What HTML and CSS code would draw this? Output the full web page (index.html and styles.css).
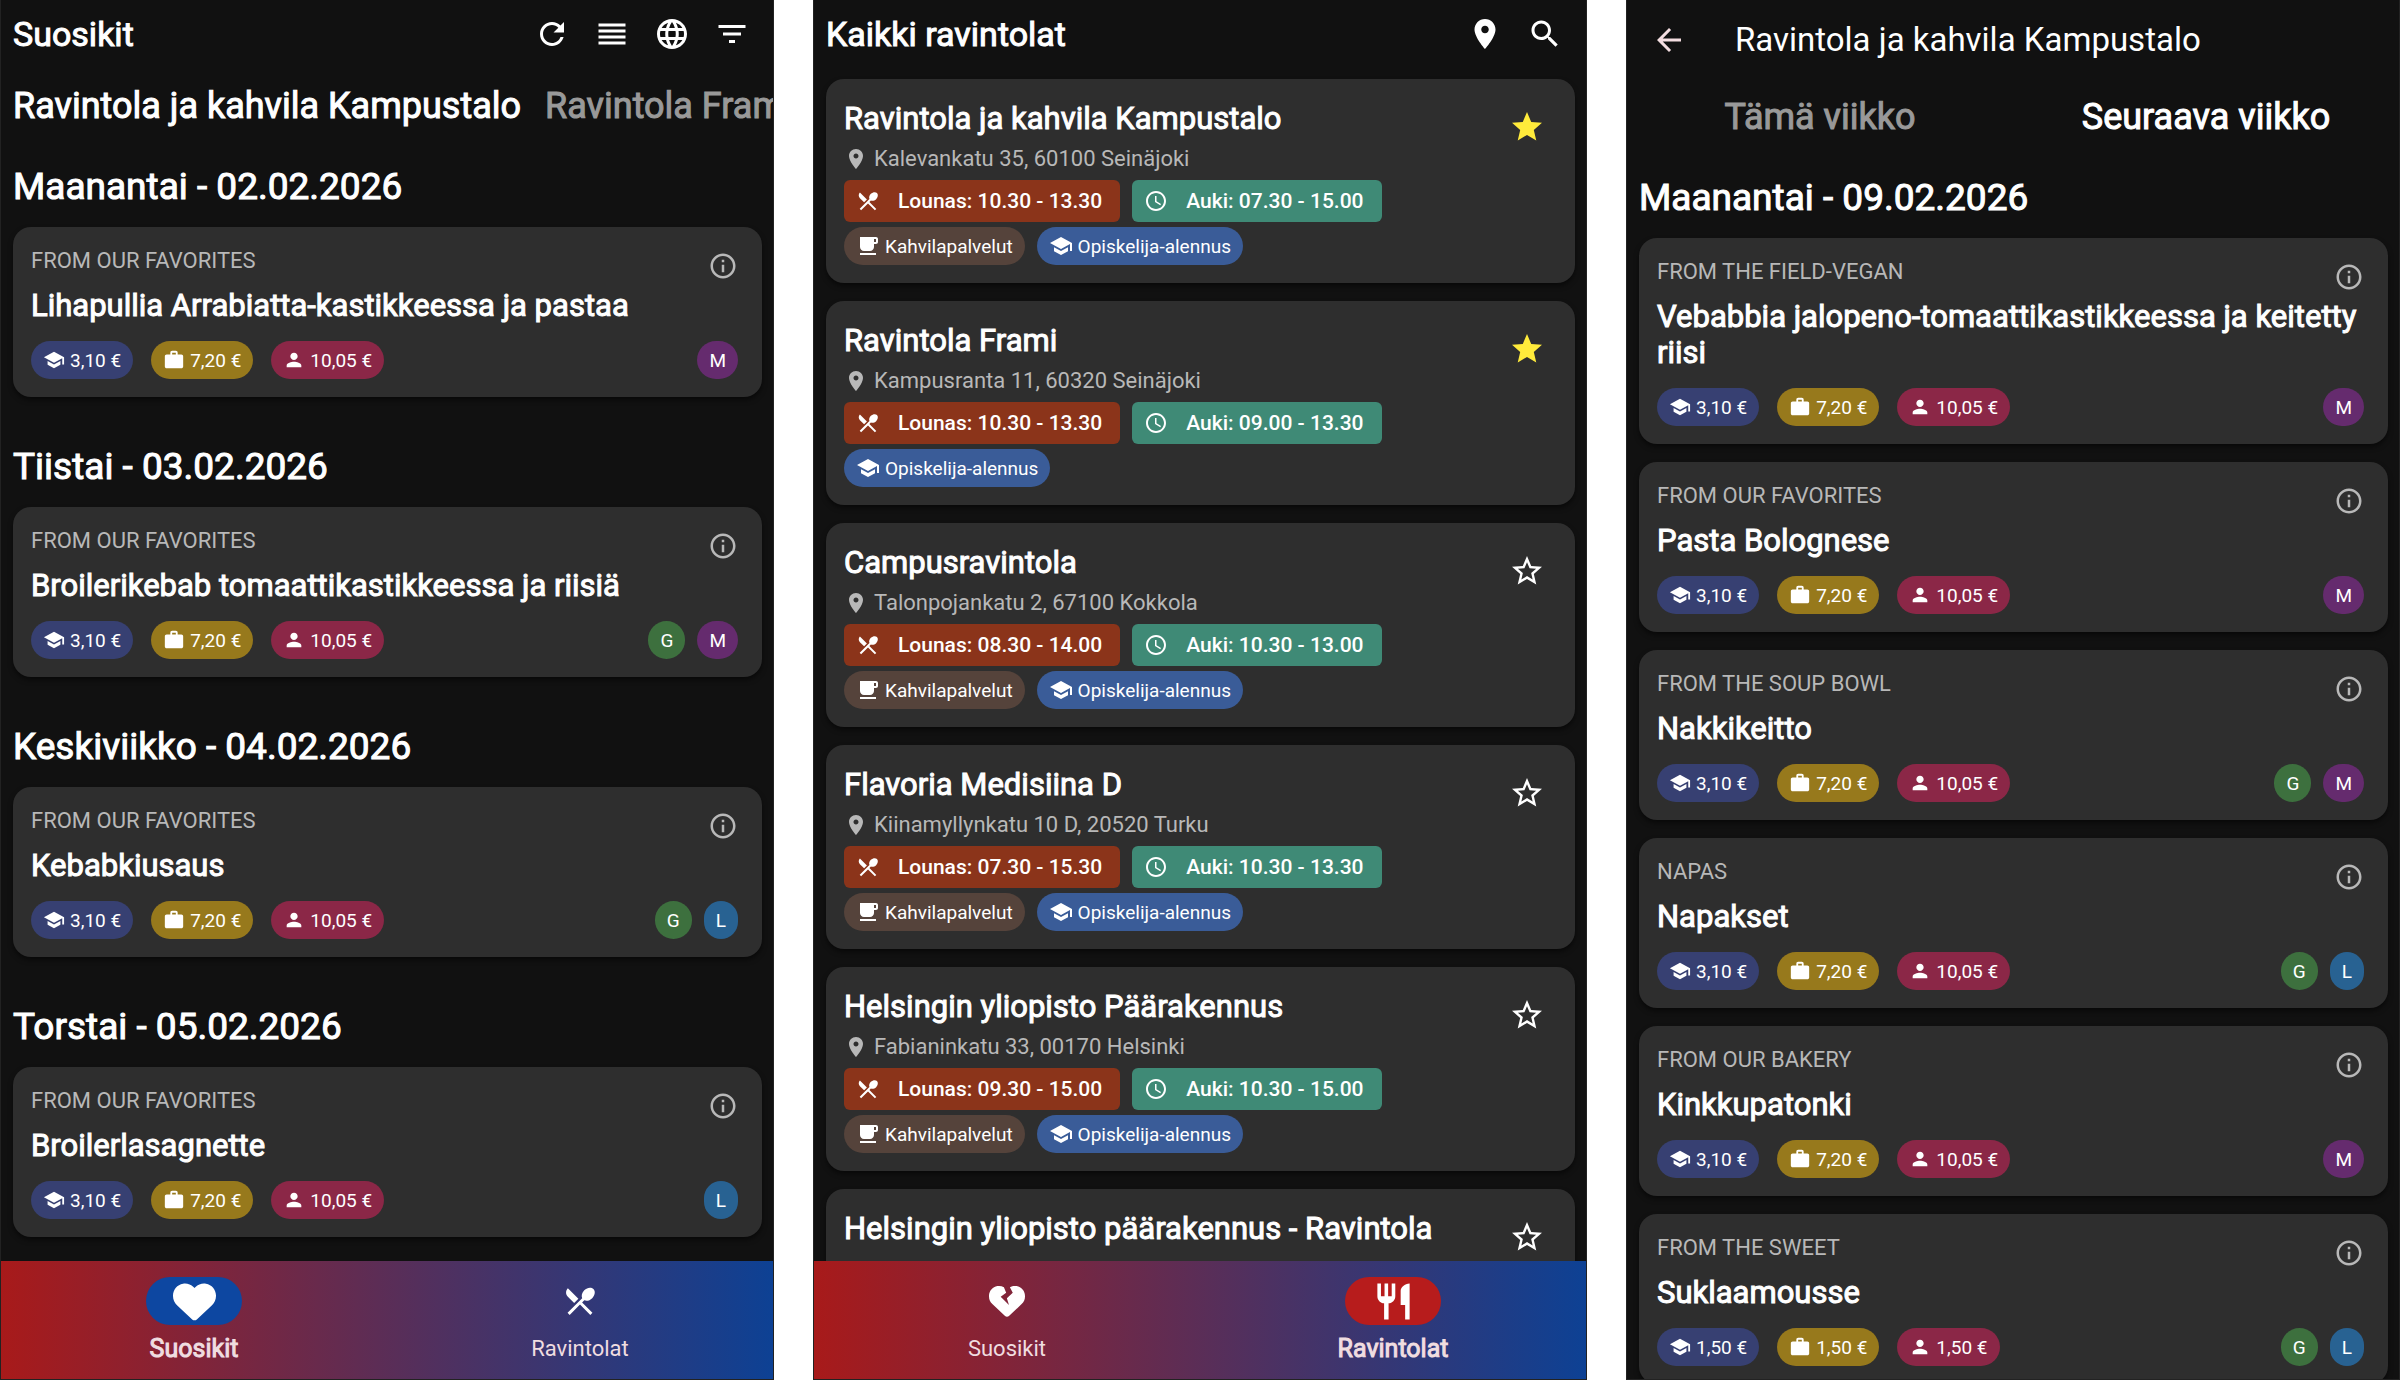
FILE: index.html
```html
<!DOCTYPE html>
<html lang="fi">
<head>
  <meta charset="UTF-8" />
  <meta name="viewport" content="width=device-width, initial-scale=1.0"/>
  <title>Ravintolat</title>
  <link rel="stylesheet" href="styles.css">
</head>
<body>

  <!-- Icons -->
  <svg class="sprite" aria-hidden="true">
    <symbol id="refresh" viewBox="0 0 24 24"><path d="M17.65 6.35C16.2 4.9 14.21 4 12 4c-4.42 0-7.99 3.58-7.99 8s3.57 8 7.99 8c3.73 0 6.84-2.55 7.73-6h-2.08c-.82 2.33-3.04 4-5.65 4-3.31 0-6-2.69-6-6s2.69-6 6-6c1.66 0 3.14.69 4.22 1.78L13 11h7V4l-2.35 2.35z"/></symbol>
    <symbol id="reorder" viewBox="0 0 24 24"><path d="M3 15h18v-2H3v2zm0 4h18v-2H3v2zm0-8h18V9H3v2zm0-6v2h18V5H3z"/></symbol>
    <symbol id="language" viewBox="0 0 24 24"><path d="M11.99 2C6.47 2 2 6.48 2 12s4.47 10 9.99 10C17.52 22 22 17.52 22 12S17.52 2 11.99 2zm6.93 6h-2.95c-.32-1.25-.78-2.45-1.38-3.56 1.84.63 3.37 1.91 4.33 3.56zM12 4.04c.83 1.2 1.48 2.53 1.91 3.96h-3.82c.43-1.43 1.08-2.76 1.91-3.96zM4.26 14C4.1 13.36 4 12.69 4 12s.1-1.36.26-2h3.38c-.08.66-.14 1.32-.14 2 0 .68.06 1.34.14 2H4.26zm.82 2h2.95c.32 1.25.78 2.45 1.38 3.56-1.84-.63-3.37-1.9-4.33-3.56zm2.95-8H5.08c.96-1.66 2.49-2.93 4.33-3.56C8.81 5.55 8.35 6.75 8.03 8zM12 19.96c-.83-1.2-1.48-2.53-1.91-3.96h3.82c-.43 1.43-1.08 2.76-1.91 3.96zM14.34 14H9.66c-.09-.66-.16-1.32-.16-2 0-.68.07-1.35.16-2h4.68c.09.65.16 1.32.16 2 0 .68-.07 1.34-.16 2zm.25 5.56c.6-1.11 1.06-2.31 1.38-3.56h2.95c-.96 1.65-2.49 2.93-4.33 3.56zM16.36 14c.08-.66.14-1.32.14-2 0-.68-.06-1.34-.14-2h3.38c.16.64.26 1.31.26 2s-.1 1.36-.26 2h-3.38z"/></symbol>
    <symbol id="filter" viewBox="0 0 24 24"><path d="M10 18h4v-2h-4v2zM3 6v2h18V6H3zm3 7h12v-2H6v2z"/></symbol>
    <symbol id="info" viewBox="0 0 24 24"><path d="M11 7h2v2h-2zm0 4h2v6h-2zm1-9C6.48 2 2 6.48 2 12s4.48 10 10 10 10-4.48 10-10S17.52 2 12 2zm0 18c-4.41 0-8-3.59-8-8s3.59-8 8-8 8 3.59 8 8-3.59 8-8 8z"/></symbol>
    <symbol id="school" viewBox="0 0 24 24"><path d="M5 13.18v4L12 21l7-3.82v-4L12 17l-7-3.82zM12 3L1 9l11 6 9-4.91V17h2V9L12 3z"/></symbol>
    <symbol id="work" viewBox="0 0 24 24"><path d="M20 6h-4V4c0-1.11-.89-2-2-2h-4c-1.11 0-2 .89-2 2v2H4c-1.11 0-1.99.89-1.99 2L2 19c0 1.11.89 2 2 2h16c1.11 0 2-.89 2-2V8c0-1.11-.89-2-2-2zm-6 0h-4V4h4v2z"/></symbol>
    <symbol id="person" viewBox="0 0 24 24"><path d="M12 12c2.21 0 4-1.79 4-4s-1.79-4-4-4-4 1.79-4 4 1.79 4 4 4zm0 2c-2.67 0-8 1.34-8 4v2h16v-2c0-2.66-5.33-4-8-4z"/></symbol>
    <symbol id="cafe" viewBox="0 0 24 24"><path d="M20 3H4v10c0 2.21 1.79 4 4 4h6c2.21 0 4-1.79 4-4v-3h2c1.11 0 2-.89 2-2V5c0-1.11-.89-2-2-2zm0 5h-2V5h2v3zM4 19h16v2H4z"/></symbol>
    <symbol id="clock" viewBox="0 0 24 24"><path d="M11.99 2C6.47 2 2 6.48 2 12s4.47 10 9.99 10C17.52 22 22 17.52 22 12S17.52 2 11.99 2zM12 20c-4.42 0-8-3.58-8-8s3.58-8 8-8 8 3.58 8 8-3.58 8-8 8zm.5-13H11v6l5.25 3.15.75-1.23-4.5-2.67z"/></symbol>
    <symbol id="lunch" viewBox="0 0 24 24"><path d="M8.1 13.34l2.83-2.83L3.91 3.5c-1.56 1.56-1.56 4.09 0 5.66l4.19 4.18zm6.78-1.81c1.53.71 3.68.21 5.27-1.38 1.91-1.91 2.28-4.65.81-6.12-1.46-1.46-4.2-1.1-6.12.81-1.59 1.59-2.09 3.74-1.38 5.27L3.7 19.87l1.41 1.41L12 14.41l6.88 6.88 1.41-1.41L13.41 13l1.47-1.47z"/></symbol>
    <symbol id="restaurant" viewBox="0 0 24 24"><path d="M11 9H9V2H7v7H5V2H3v7c0 2.12 1.66 3.84 3.75 3.97V22h2.5v-9.03C11.34 12.84 13 11.12 13 9V2h-2v7zm5-3v8h2.5v8H21V2c-2.76 0-5 2.24-5 4z"/></symbol>
    <symbol id="heart" viewBox="0 0 512 512"><path d="M47.6 300.4L228.3 469.1c7.5 7 17.4 10.9 27.7 10.9s20.2-3.9 27.7-10.9L464.4 300.4c30.4-28.3 47.6-68 47.6-109.5v-5.8c0-69.9-50.5-129.5-119.4-141C347 36.5 300.6 51.4 268 84L256 96 244 84c-32.6-32.6-79-47.5-124.6-39.9C50.5 55.6 0 115.2 0 185.1v5.8c0 41.5 17.2 81.2 47.6 109.5z"/></symbol>
    <symbol id="heart-broken" viewBox="0 0 512 512"><path d="M47.6 300.4L228.3 469.1c7.5 7 17.4 10.9 27.7 10.9s20.2-3.9 27.7-10.9L464.4 300.4c30.4-28.3 47.6-68 47.6-109.5v-5.8c0-69.9-50.5-129.5-119.4-141C359 38.5 325 45 297 62L338 137 254 218 284 312 166 194 244 137 212 60C184 44 152 38.7 119.4 44.1C50.5 55.6 0 115.2 0 185.1v5.8c0 41.5 17.2 81.2 47.6 109.5z"/></symbol>
    <symbol id="pin" viewBox="0 0 24 24"><path d="M12 2C8.13 2 5 5.13 5 9c0 5.25 7 13 7 13s7-7.75 7-13c0-3.87-3.13-7-7-7zm0 9.5c-1.38 0-2.5-1.12-2.5-2.5s1.12-2.5 2.5-2.5 2.5 1.12 2.5 2.5-1.12 2.5-2.5 2.5z"/></symbol>
    <symbol id="search" viewBox="0 0 24 24"><path d="M15.5 14h-.79l-.28-.27C15.41 12.59 16 11.11 16 9.5 16 5.91 13.09 3 9.5 3S3 5.91 3 9.5 5.91 16 9.5 16c1.61 0 3.09-.59 4.23-1.57l.27.28v.79l5 4.99L20.49 19l-4.99-5zm-6 0C7.01 14 5 11.99 5 9.5S7.01 5 9.5 5 14 7.01 14 9.5 11.99 14 9.5 14z"/></symbol>
    <symbol id="star" viewBox="0 0 24 24"><path d="M12 17.27L18.18 21l-1.64-7.03L22 9.24l-7.19-.61L12 2 9.19 8.63 2 9.24l5.46 4.73L5.82 21z"/></symbol>
    <symbol id="star-border" viewBox="0 0 24 24"><path d="M22 9.24l-7.19-.62L12 2 9.19 8.63 2 9.24l5.46 4.73L5.82 21 12 17.27 18.18 21l-1.63-7.03L22 9.24zM12 15.4l-3.76 2.27 1-4.28-3.32-2.88 4.38-.38L12 6.1l1.71 4.04 4.38.38-3.32 2.88 1 4.28L12 15.4z"/></symbol>
    <symbol id="back" viewBox="0 0 24 24"><path d="M20 11H7.83l5.59-5.59L12 4l-8 8 8 8 1.41-1.41L7.83 13H20v-2z"/></symbol>
  </svg>

  <!-- Favorites -->
  <div class="phone">
    <header>
      <h1>Suosikit</h1>
      <div class="actions">
        <button aria-label="Päivitä"><svg class="icon"><use href="#refresh"/></svg></button>
        <button aria-label="Järjestä"><svg class="icon"><use href="#reorder"/></svg></button>
        <button aria-label="Kieli"><svg class="icon"><use href="#language"/></svg></button>
        <button aria-label="Suodata"><svg class="icon"><use href="#filter"/></svg></button>
      </div>
    </header>
    <div class="tabs">
      <button class="active">Ravintola ja kahvila Kampustalo</button>
      <button>Ravintola Frami</button>
    </div>
    <main>
      <section class="day">
        <h2>Maanantai - 02.02.2026</h2>
        <article class="meal">
          <div class="meal-head"><p>FROM OUR FAVORITES</p><button aria-label="Tiedot"><svg class="icon"><use href="#info"/></svg></button></div>
          <h3>Lihapullia Arrabiatta-kastikkeessa ja pastaa</h3>
          <div class="prices">
            <span class="chip student"><svg class="icon"><use href="#school"/></svg>3,10 €</span>
            <span class="chip staff"><svg class="icon"><use href="#work"/></svg>7,20 €</span>
            <span class="chip guest"><svg class="icon"><use href="#person"/></svg>10,05 €</span>
            <div class="diets"><span class="chip m">M</span></div>
          </div>
        </article>
      </section>
      <section class="day">
        <h2>Tiistai - 03.02.2026</h2>
        <article class="meal">
          <div class="meal-head"><p>FROM OUR FAVORITES</p><button aria-label="Tiedot"><svg class="icon"><use href="#info"/></svg></button></div>
          <h3>Broilerikebab tomaattikastikkeessa ja riisiä</h3>
          <div class="prices">
            <span class="chip student"><svg class="icon"><use href="#school"/></svg>3,10 €</span>
            <span class="chip staff"><svg class="icon"><use href="#work"/></svg>7,20 €</span>
            <span class="chip guest"><svg class="icon"><use href="#person"/></svg>10,05 €</span>
            <div class="diets"><span class="chip g">G</span><span class="chip m">M</span></div>
          </div>
        </article>
      </section>
      <section class="day">
        <h2>Keskiviikko - 04.02.2026</h2>
        <article class="meal">
          <div class="meal-head"><p>FROM OUR FAVORITES</p><button aria-label="Tiedot"><svg class="icon"><use href="#info"/></svg></button></div>
          <h3>Kebabkiusaus</h3>
          <div class="prices">
            <span class="chip student"><svg class="icon"><use href="#school"/></svg>3,10 €</span>
            <span class="chip staff"><svg class="icon"><use href="#work"/></svg>7,20 €</span>
            <span class="chip guest"><svg class="icon"><use href="#person"/></svg>10,05 €</span>
            <div class="diets"><span class="chip g">G</span><span class="chip l">L</span></div>
          </div>
        </article>
      </section>
      <section class="day">
        <h2>Torstai - 05.02.2026</h2>
        <article class="meal">
          <div class="meal-head"><p>FROM OUR FAVORITES</p><button aria-label="Tiedot"><svg class="icon"><use href="#info"/></svg></button></div>
          <h3>Broilerlasagnette</h3>
          <div class="prices">
            <span class="chip student"><svg class="icon"><use href="#school"/></svg>3,10 €</span>
            <span class="chip staff"><svg class="icon"><use href="#work"/></svg>7,20 €</span>
            <span class="chip guest"><svg class="icon"><use href="#person"/></svg>10,05 €</span>
            <div class="diets"><span class="chip l">L</span></div>
          </div>
        </article>
      </section>
    </main>
    <nav>
      <a href="#" class="active"><span class="pill blue"><svg class="icon"><use href="#heart"/></svg></span>Suosikit</a>
      <a href="#"><span class="pill"><svg class="icon"><use href="#lunch"/></svg></span>Ravintolat</a>
    </nav>
  </div>

  <!-- All restaurants -->
  <div class="phone">
    <header>
      <h1>Kaikki ravintolat</h1>
      <div class="actions">
        <button aria-label="Sijainti"><svg class="icon"><use href="#pin"/></svg></button>
        <button aria-label="Haku"><svg class="icon"><use href="#search"/></svg></button>
      </div>
    </header>
    <main class="list restaurants">
      <article class="restaurant">
        <div class="details">
          <h3>Ravintola ja kahvila Kampustalo</h3>
          <p class="address"><svg class="icon"><use href="#pin"/></svg>Kalevankatu 35, 60100 Seinäjoki</p>
          <div class="hours">
            <span class="lunch"><svg class="icon"><use href="#lunch"/></svg>Lounas: 10.30 - 13.30</span>
            <span class="open"><svg class="icon"><use href="#clock"/></svg>Auki: 07.30 - 15.00</span>
          </div>
          <div class="tags">
            <span class="chip cafe"><svg class="icon"><use href="#cafe"/></svg>Kahvilapalvelut</span>
            <span class="chip discount"><svg class="icon"><use href="#school"/></svg>Opiskelija-alennus</span>
          </div>
        </div>
        <button class="star on" aria-label="Suosikki"><svg class="icon"><use href="#star"/></svg></button>
      </article>
      <article class="restaurant">
        <div class="details">
          <h3>Ravintola Frami</h3>
          <p class="address"><svg class="icon"><use href="#pin"/></svg>Kampusranta 11, 60320 Seinäjoki</p>
          <div class="hours">
            <span class="lunch"><svg class="icon"><use href="#lunch"/></svg>Lounas: 10.30 - 13.30</span>
            <span class="open"><svg class="icon"><use href="#clock"/></svg>Auki: 09.00 - 13.30</span>
          </div>
          <div class="tags">
            <span class="chip discount"><svg class="icon"><use href="#school"/></svg>Opiskelija-alennus</span>
          </div>
        </div>
        <button class="star on" aria-label="Suosikki"><svg class="icon"><use href="#star"/></svg></button>
      </article>
      <article class="restaurant">
        <div class="details">
          <h3>Campusravintola</h3>
          <p class="address"><svg class="icon"><use href="#pin"/></svg>Talonpojankatu 2, 67100 Kokkola</p>
          <div class="hours">
            <span class="lunch"><svg class="icon"><use href="#lunch"/></svg>Lounas: 08.30 - 14.00</span>
            <span class="open"><svg class="icon"><use href="#clock"/></svg>Auki: 10.30 - 13.00</span>
          </div>
          <div class="tags">
            <span class="chip cafe"><svg class="icon"><use href="#cafe"/></svg>Kahvilapalvelut</span>
            <span class="chip discount"><svg class="icon"><use href="#school"/></svg>Opiskelija-alennus</span>
          </div>
        </div>
        <button class="star" aria-label="Suosikki"><svg class="icon"><use href="#star-border"/></svg></button>
      </article>
      <article class="restaurant">
        <div class="details">
          <h3>Flavoria Medisiina D</h3>
          <p class="address"><svg class="icon"><use href="#pin"/></svg>Kiinamyllynkatu 10 D, 20520 Turku</p>
          <div class="hours">
            <span class="lunch"><svg class="icon"><use href="#lunch"/></svg>Lounas: 07.30 - 15.30</span>
            <span class="open"><svg class="icon"><use href="#clock"/></svg>Auki: 10.30 - 13.30</span>
          </div>
          <div class="tags">
            <span class="chip cafe"><svg class="icon"><use href="#cafe"/></svg>Kahvilapalvelut</span>
            <span class="chip discount"><svg class="icon"><use href="#school"/></svg>Opiskelija-alennus</span>
          </div>
        </div>
        <button class="star" aria-label="Suosikki"><svg class="icon"><use href="#star-border"/></svg></button>
      </article>
      <article class="restaurant">
        <div class="details">
          <h3>Helsingin yliopisto Päärakennus</h3>
          <p class="address"><svg class="icon"><use href="#pin"/></svg>Fabianinkatu 33, 00170 Helsinki</p>
          <div class="hours">
            <span class="lunch"><svg class="icon"><use href="#lunch"/></svg>Lounas: 09.30 - 15.00</span>
            <span class="open"><svg class="icon"><use href="#clock"/></svg>Auki: 10.30 - 15.00</span>
          </div>
          <div class="tags">
            <span class="chip cafe"><svg class="icon"><use href="#cafe"/></svg>Kahvilapalvelut</span>
            <span class="chip discount"><svg class="icon"><use href="#school"/></svg>Opiskelija-alennus</span>
          </div>
        </div>
        <button class="star" aria-label="Suosikki"><svg class="icon"><use href="#star-border"/></svg></button>
      </article>
      <article class="restaurant">
        <div class="details">
          <h3>Helsingin yliopisto päärakennus - Ravintola Elsa</h3>
        </div>
        <button class="star" aria-label="Suosikki"><svg class="icon"><use href="#star-border"/></svg></button>
      </article>
    </main>
    <nav>
      <a href="#"><span class="pill"><svg class="icon"><use href="#heart-broken"/></svg></span>Suosikit</a>
      <a href="#" class="active"><span class="pill red"><svg class="icon"><use href="#restaurant"/></svg></span>Ravintolat</a>
    </nav>
  </div>

  <!-- Weekly menu -->
  <div class="phone">
    <header class="menu-header">
      <button class="back" aria-label="Takaisin"><svg class="icon"><use href="#back"/></svg></button>
      <h1>Ravintola ja kahvila Kampustalo</h1>
    </header>
    <div class="tabs weeks">
      <button>Tämä viikko</button>
      <button class="active">Seuraava viikko</button>
    </div>
    <main>
      <section class="day list">
        <h2>Maanantai - 09.02.2026</h2>
        <article class="meal">
          <div class="meal-head"><p>FROM THE FIELD-VEGAN</p><button aria-label="Tiedot"><svg class="icon"><use href="#info"/></svg></button></div>
          <h3>Vebabbia jalopeno-tomaattikastikkeessa ja keitetty riisi</h3>
          <div class="prices">
            <span class="chip student"><svg class="icon"><use href="#school"/></svg>3,10 €</span>
            <span class="chip staff"><svg class="icon"><use href="#work"/></svg>7,20 €</span>
            <span class="chip guest"><svg class="icon"><use href="#person"/></svg>10,05 €</span>
            <div class="diets"><span class="chip m">M</span></div>
          </div>
        </article>
        <article class="meal">
          <div class="meal-head"><p>FROM OUR FAVORITES</p><button aria-label="Tiedot"><svg class="icon"><use href="#info"/></svg></button></div>
          <h3>Pasta Bolognese</h3>
          <div class="prices">
            <span class="chip student"><svg class="icon"><use href="#school"/></svg>3,10 €</span>
            <span class="chip staff"><svg class="icon"><use href="#work"/></svg>7,20 €</span>
            <span class="chip guest"><svg class="icon"><use href="#person"/></svg>10,05 €</span>
            <div class="diets"><span class="chip m">M</span></div>
          </div>
        </article>
        <article class="meal">
          <div class="meal-head"><p>FROM THE SOUP BOWL</p><button aria-label="Tiedot"><svg class="icon"><use href="#info"/></svg></button></div>
          <h3>Nakkikeitto</h3>
          <div class="prices">
            <span class="chip student"><svg class="icon"><use href="#school"/></svg>3,10 €</span>
            <span class="chip staff"><svg class="icon"><use href="#work"/></svg>7,20 €</span>
            <span class="chip guest"><svg class="icon"><use href="#person"/></svg>10,05 €</span>
            <div class="diets"><span class="chip g">G</span><span class="chip m">M</span></div>
          </div>
        </article>
        <article class="meal">
          <div class="meal-head"><p>NAPAS</p><button aria-label="Tiedot"><svg class="icon"><use href="#info"/></svg></button></div>
          <h3>Napakset</h3>
          <div class="prices">
            <span class="chip student"><svg class="icon"><use href="#school"/></svg>3,10 €</span>
            <span class="chip staff"><svg class="icon"><use href="#work"/></svg>7,20 €</span>
            <span class="chip guest"><svg class="icon"><use href="#person"/></svg>10,05 €</span>
            <div class="diets"><span class="chip g">G</span><span class="chip l">L</span></div>
          </div>
        </article>
        <article class="meal">
          <div class="meal-head"><p>FROM OUR BAKERY</p><button aria-label="Tiedot"><svg class="icon"><use href="#info"/></svg></button></div>
          <h3>Kinkkupatonki</h3>
          <div class="prices">
            <span class="chip student"><svg class="icon"><use href="#school"/></svg>3,10 €</span>
            <span class="chip staff"><svg class="icon"><use href="#work"/></svg>7,20 €</span>
            <span class="chip guest"><svg class="icon"><use href="#person"/></svg>10,05 €</span>
            <div class="diets"><span class="chip m">M</span></div>
          </div>
        </article>
        <article class="meal">
          <div class="meal-head"><p>FROM THE SWEET</p><button aria-label="Tiedot"><svg class="icon"><use href="#info"/></svg></button></div>
          <h3>Suklaamousse</h3>
          <div class="prices">
            <span class="chip student"><svg class="icon"><use href="#school"/></svg>1,50 €</span>
            <span class="chip staff"><svg class="icon"><use href="#work"/></svg>1,50 €</span>
            <span class="chip guest"><svg class="icon"><use href="#person"/></svg>1,50 €</span>
            <div class="diets"><span class="chip g">G</span><span class="chip l">L</span></div>
          </div>
        </article>
      </section>
    </main>
  </div>

</body>
</html>
```
FILE: styles.css
```css
* {
  box-sizing: border-box;
}

body {
  font-family: Roboto, sans-serif;
  background-color: #fff;
  color: #fff;
  margin: 0;
  height: 100vh;
  display: grid;
  grid-template-columns: repeat(3, minmax(0, 1fr));
  gap: 39px;
}

h1, h2, h3, p {
  margin: 0;
  font-weight: 400;
}

button {
  background: none;
  border: none;
  padding: 0;
  color: inherit;
  font-family: inherit;
  cursor: pointer;
}

.sprite {
  display: none;
}

.icon {
  width: 36px;
  height: 36px;
  fill: currentColor;
  display: block;
  flex-shrink: 0;
}

.phone {
  background-color: #111;
  border: 1px solid #222;
  border-top: none;
  height: 100vh;
  display: flex;
  flex-direction: column;
  overflow: hidden;
}

/* Header */
header {
  display: flex;
  align-items: center;
  justify-content: space-between;
  padding: 14px 23px 14px 12px;
}

h1 {
  font-size: 34px;
  line-height: 40px;
  -webkit-text-stroke: 1px;
}

.actions {
  display: flex;
  gap: 24px;
}

.menu-header {
  justify-content: flex-start;
  gap: 48px;
  padding: 20px 24px;
}

.menu-header h1 {
  font-size: 33px;
  -webkit-text-stroke: 0;
}

.back {
  color: #f3dde0;
}

/* Tabs */
.tabs {
  display: flex;
  gap: 24px;
  padding: 16px 12px 0;
  white-space: nowrap;
}

.tabs button {
  font-size: 36px;
  line-height: 44px;
  color: #999;
  -webkit-text-stroke: 1px;
}

.tabs .active {
  color: #fff;
}

.weeks {
  gap: 0;
  padding: 15px 0 0;
}

.weeks button {
  flex: 1;
}

/* Lists */
main {
  flex: 1;
  min-height: 0;
  overflow: hidden;
  padding: 37px 11px 0 12px;
}

.list {
  display: flex;
  flex-direction: column;
  gap: 18px;
}

.restaurants {
  padding-top: 11px;
}

.day + .day {
  margin-top: 48px;
}

h2 {
  font-size: 37px;
  line-height: 44px;
  margin-bottom: 18px;
  -webkit-text-stroke: 1px;
}

.list h2 {
  margin-bottom: 0;
}

h3 {
  font-size: 31px;
  line-height: 36px;
  -webkit-text-stroke: 1px;
}

/* Cards */
.meal,
.restaurant {
  background-color: #2e2e2e;
  border-radius: 18px;
  box-shadow: 0 3px 5px rgba(0,0,0,0.5);
  flex-shrink: 0;
}

.meal {
  padding: 21px 24px 18px 18px;
}

.meal-head {
  display: flex;
  justify-content: space-between;
  color: #b8b8b8;
  margin-bottom: 7px;
}

.meal-head p {
  font-size: 22px;
  line-height: 26px;
}

.meal-head button {
  margin-top: 3px;
}

.meal-head .icon {
  width: 30px;
  height: 30px;
}

.prices {
  display: flex;
  gap: 18px;
  margin-top: 17px;
}

.diets {
  display: flex;
  gap: 12px;
  margin-left: auto;
}

.chip {
  display: flex;
  align-items: center;
  gap: 5px;
  height: 38px;
  padding: 0 12px;
  border-radius: 19px;
  font-size: 19px;
}

.chip .icon {
  width: 22px;
  height: 22px;
}

.student { background-color: #374072; }
.staff { background-color: #97791c; }
.guest { background-color: #8b2747; }
.m { background-color: #652b6e; }
.g { background-color: #3d703e; }
.l { background-color: #286292; }
.cafe { background-color: #55433b; }
.discount { background-color: #3a5c98; }

.restaurant {
  display: flex;
  align-items: flex-start;
  gap: 24px;
  padding: 16px 30px 18px 18px;
}

.restaurant h3 {
  line-height: 47px;
}

.details {
  flex: 1;
}

.address {
  display: flex;
  align-items: center;
  gap: 6px;
  margin: 4px 0 8px;
  font-size: 22px;
  line-height: 26px;
  color: #b8b8b8;
}

.address .icon,
.hours .icon,
.tags .icon {
  width: 24px;
  height: 24px;
}

.hours,
.tags {
  display: flex;
  gap: 12px;
}

.tags {
  margin-top: 5px;
}

.hours span {
  display: flex;
  align-items: center;
  gap: 18px;
  height: 42px;
  padding: 0 18px 0 12px;
  border-radius: 6px;
  font-size: 21px;
  font-weight: 500;
}

.lunch { background-color: #8b341a; }
.open { background-color: #3f8a76; }

.star {
  margin-top: 14px;
}

.star.on {
  color: #ffeb3b;
}

/* Bottom navigation */
nav {
  display: flex;
  background: linear-gradient(to right, #a81a1a, #0d4194);
}

nav a {
  flex: 1;
  display: flex;
  flex-direction: column;
  align-items: center;
  gap: 9px;
  padding: 16px 0 15px;
  color: #f0dde0;
  font-size: 22px;
  line-height: 30px;
  text-decoration: none;
}

nav .active {
  font-size: 25px;
  -webkit-text-stroke: 1px;
}

.pill {
  display: flex;
  align-items: center;
  justify-content: center;
  width: 96px;
  height: 48px;
  border-radius: 24px;
  color: #fff;
}

.active .icon {
  width: 43px;
  height: 43px;
}

.blue { background-color: #0d47a1; }
.red { background-color: #b71c1c; }
```
